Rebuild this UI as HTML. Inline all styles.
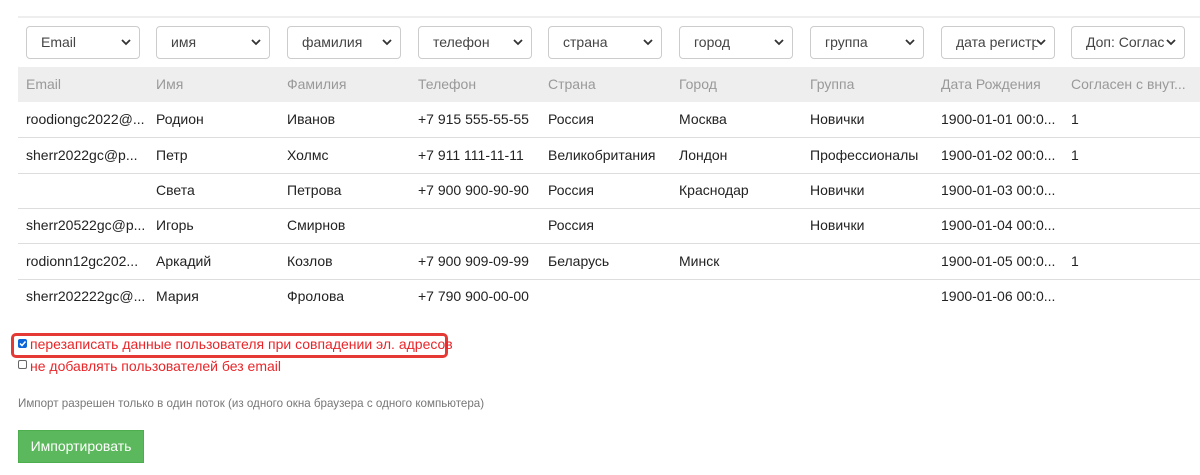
<!DOCTYPE html>
<html><head><meta charset="utf-8"><style>
*{box-sizing:border-box;margin:0;padding:0}
body{width:1200px;height:475px;overflow:hidden;background:#fff;font-family:"Liberation Sans",sans-serif;color:#222;font-size:14px;position:relative}
.top{position:absolute;left:18px;top:16px;width:1182px;height:2px;background:#eee}
.sel{position:absolute;top:26px;height:33px;width:114px;border:1px solid #ccc;border-radius:4px;font-size:14px;color:#444;line-height:31px;padding-left:14px;white-space:nowrap;overflow:hidden}
.sel svg{position:absolute;right:8px;top:12px}
.hdr{position:absolute;left:18px;top:67px;width:1182px;height:35px;background:#eee}
.row{position:absolute;left:18px;width:1182px;height:35.5px;border-bottom:1px solid #ddd}
.c{position:absolute;top:0;line-height:35px;white-space:nowrap;overflow:hidden;width:122px}
.hdr .c{color:#999}
.red{color:#e8262a;font-size:14px;position:absolute;left:30px}
.cb{position:absolute;left:18px;width:9px;height:9px;border:1px solid #666;border-radius:2px}
</style></head><body>
<div class="top"></div>
<div class="sel" style="left:26px">Email<svg width="10" height="7"><path d="M1 1l4 4 4-4" stroke="#333" stroke-width="1.8" fill="none"/></svg></div>
<div class="sel" style="left:156px">имя<svg width="10" height="7"><path d="M1 1l4 4 4-4" stroke="#333" stroke-width="1.8" fill="none"/></svg></div>
<div class="sel" style="left:287px">фамилия<svg width="10" height="7"><path d="M1 1l4 4 4-4" stroke="#333" stroke-width="1.8" fill="none"/></svg></div>
<div class="sel" style="left:418px">телефон<svg width="10" height="7"><path d="M1 1l4 4 4-4" stroke="#333" stroke-width="1.8" fill="none"/></svg></div>
<div class="sel" style="left:548px">страна<svg width="10" height="7"><path d="M1 1l4 4 4-4" stroke="#333" stroke-width="1.8" fill="none"/></svg></div>
<div class="sel" style="left:679px">город<svg width="10" height="7"><path d="M1 1l4 4 4-4" stroke="#333" stroke-width="1.8" fill="none"/></svg></div>
<div class="sel" style="left:810px">группа<svg width="10" height="7"><path d="M1 1l4 4 4-4" stroke="#333" stroke-width="1.8" fill="none"/></svg></div>
<div class="sel" style="left:941px">дата регистр<svg width="10" height="7" style="background:#fff"><path d="M1 1l4 4 4-4" stroke="#333" stroke-width="1.8" fill="none"/></svg></div>
<div class="sel" style="left:1071px">Доп: Соглас<svg width="10" height="7" style="background:#fff"><path d="M1 1l4 4 4-4" stroke="#333" stroke-width="1.8" fill="none"/></svg></div>

<div class="hdr"><span class="c" style="left:8px">Email</span><span class="c" style="left:138px">Имя</span><span class="c" style="left:269px">Фамилия</span><span class="c" style="left:400px">Телефон</span><span class="c" style="left:530px">Страна</span><span class="c" style="left:661px">Город</span><span class="c" style="left:792px">Группа</span><span class="c" style="left:923px">Дата Рождения</span><span class="c" style="left:1053px;width:129px">Согласен с внут...</span></div>

<div class="row" style="top:102px"><span class="c" style="left:8px">roodiongc2022@...</span><span class="c" style="left:138px">Родион</span><span class="c" style="left:269px">Иванов</span><span class="c" style="left:400px">+7 915 555-55-55</span><span class="c" style="left:530px">Россия</span><span class="c" style="left:661px">Москва</span><span class="c" style="left:792px">Новички</span><span class="c" style="left:923px">1900-01-01 00:0...</span><span class="c" style="left:1053px">1</span></div>
<div class="row" style="top:138px"><span class="c" style="left:8px">sherr2022gc@p...</span><span class="c" style="left:138px">Петр</span><span class="c" style="left:269px">Холмс</span><span class="c" style="left:400px">+7 911 111-11-11</span><span class="c" style="left:530px">Великобритания</span><span class="c" style="left:661px">Лондон</span><span class="c" style="left:792px">Профессионалы</span><span class="c" style="left:923px">1900-01-02 00:0...</span><span class="c" style="left:1053px">1</span></div>
<div class="row" style="top:173px"><span class="c" style="left:138px">Света</span><span class="c" style="left:269px">Петрова</span><span class="c" style="left:400px">+7 900 900-90-90</span><span class="c" style="left:530px">Россия</span><span class="c" style="left:661px">Краснодар</span><span class="c" style="left:792px">Новички</span><span class="c" style="left:923px">1900-01-03 00:0...</span></div>
<div class="row" style="top:208px"><span class="c" style="left:8px">sherr20522gc@p...</span><span class="c" style="left:138px">Игорь</span><span class="c" style="left:269px">Смирнов</span><span class="c" style="left:530px">Россия</span><span class="c" style="left:792px">Новички</span><span class="c" style="left:923px">1900-01-04 00:0...</span></div>
<div class="row" style="top:244px"><span class="c" style="left:8px">rodionn12gc202...</span><span class="c" style="left:138px">Аркадий</span><span class="c" style="left:269px">Козлов</span><span class="c" style="left:400px">+7 900 909-09-99</span><span class="c" style="left:530px">Беларусь</span><span class="c" style="left:661px">Минск</span><span class="c" style="left:923px">1900-01-05 00:0...</span><span class="c" style="left:1053px">1</span></div>
<div class="row" style="top:279px;border-bottom:none"><span class="c" style="left:8px">sherr202222gc@...</span><span class="c" style="left:138px">Мария</span><span class="c" style="left:269px">Фролова</span><span class="c" style="left:400px">+7 790 900-00-00</span><span class="c" style="left:923px">1900-01-06 00:0...</span></div>

<div style="position:absolute;left:11px;top:333px;width:437px;height:25px;border:3px solid #e53935;border-radius:5px"></div>
<div class="cb" style="top:339px;background:#0a66d8;border-color:#0a66d8"><svg width="9" height="9" style="position:absolute;left:-1px;top:-1px"><path d="M2 4.5l2 2 3.5-4" stroke="#fff" stroke-width="1.5" fill="none"/></svg></div>
<div class="red" style="top:336px">перезаписать данные пользователя при совпадении эл. адресов</div>
<div class="cb" style="top:360px"></div>
<div class="red" style="top:358px">не добавлять пользователей без email</div>
<div style="position:absolute;left:18px;top:397px;font-size:11.6px;color:#777">Импорт разрешен только в один поток (из одного окна браузера с одного компьютера)</div>
<div style="position:absolute;left:18px;top:430px;width:126px;height:33px;background:#5cb85c;border:1px solid #4cae4c;color:#fff;font-size:14px;line-height:31px;text-align:center">Импортировать</div>
</body></html>
